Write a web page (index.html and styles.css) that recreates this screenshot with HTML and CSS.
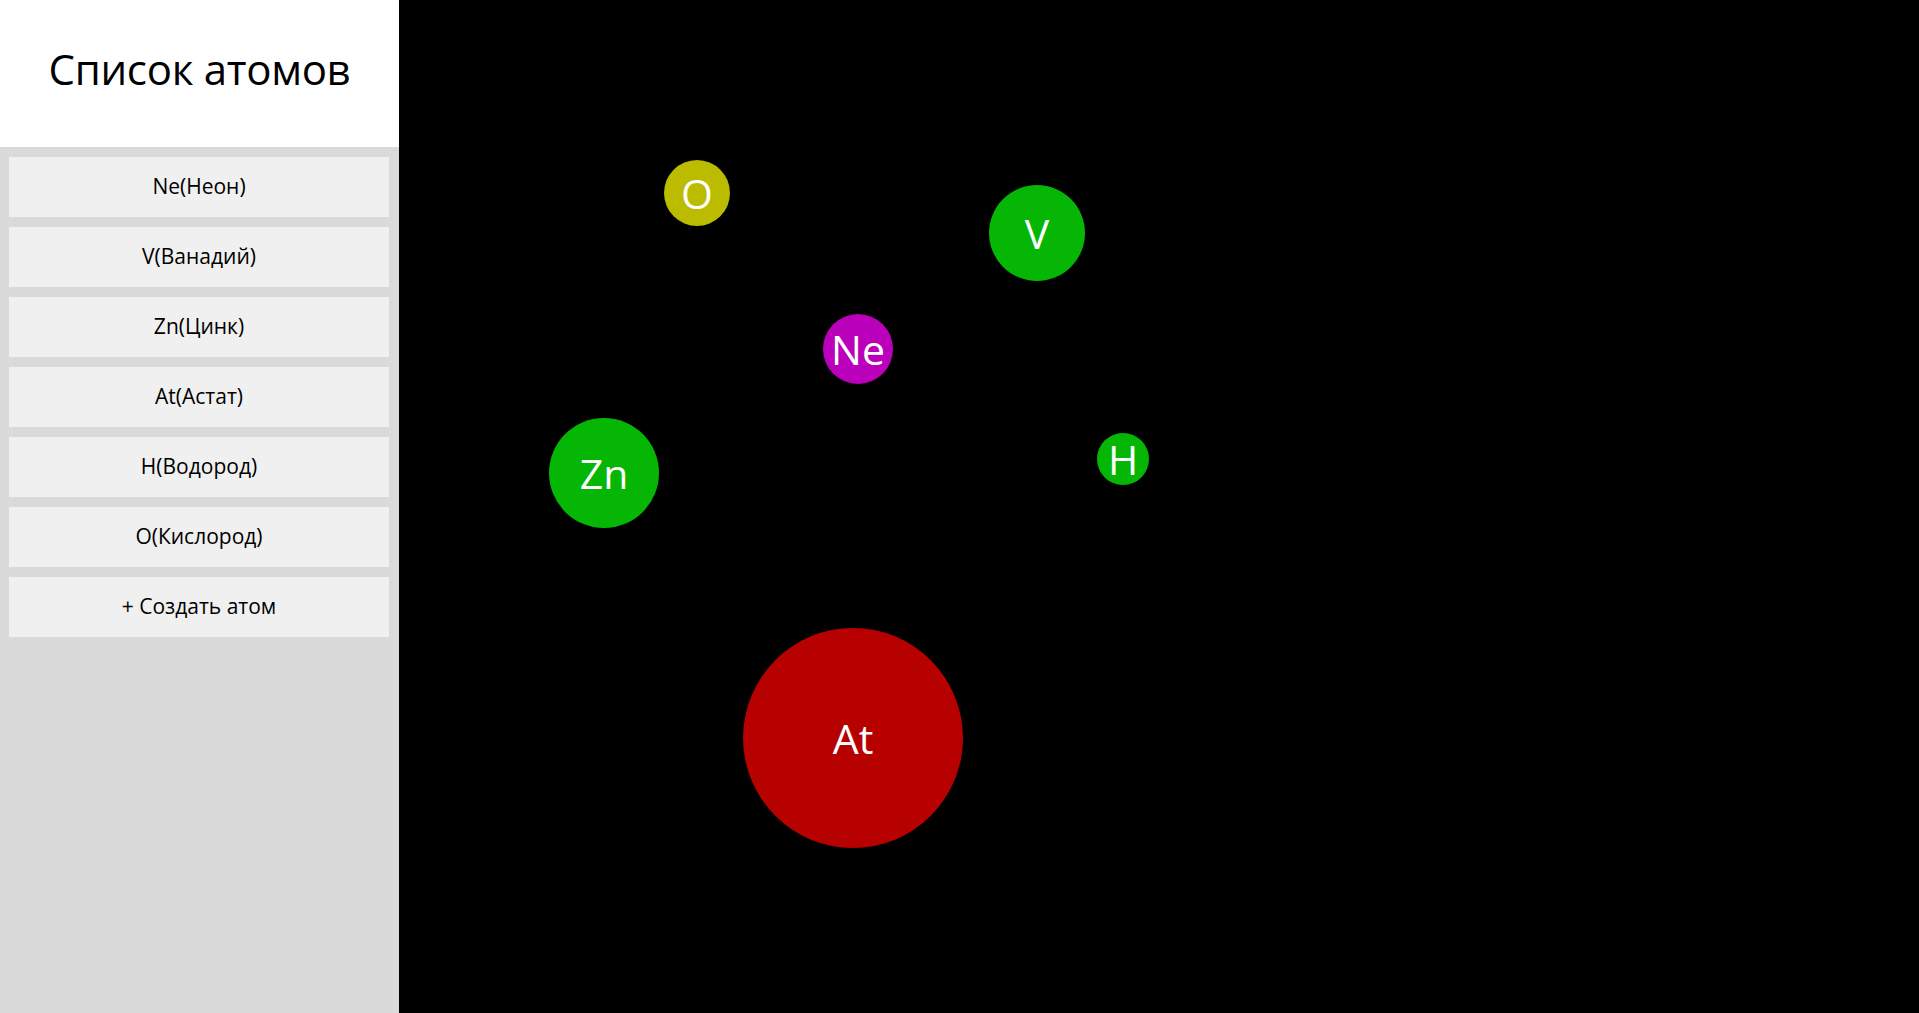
FILE: index.html
```html
<!DOCTYPE html>
<html>
<head>
    <title>Список атомов</title>
    <link rel="stylesheet" href="styles.css">
</head>
<body>
    <div id="sidebar">
        <div id="sidebarHeader">
            <h1>Список атомов</h1>
        </div>
        <div id="atomList">
            <button class="atomButton">Ne(Неон)</button>
            <button class="atomButton">V(Ванадий)</button>
            <button class="atomButton">Zn(Цинк)</button>
            <button class="atomButton">At(Астат)</button>
            <button class="atomButton">H(Водород)</button>
            <button class="atomButton">O(Кислород)</button>
            <button class="atomButton" id="createAtomButton">+ Создать атом</button>
        </div>
    </div>

    <div id="field"></div>

    <script>
        const atoms = [
            { symbol: 'O', color: '#bbbb00', x: 265, y: 160, size: 66 },
            { symbol: 'V', color: '#05b605', x: 590, y: 185, size: 96 },
            { symbol: 'Ne', color: '#bb00bb', x: 424, y: 314, size: 70 },
            { symbol: 'Zn', color: '#05b605', x: 150, y: 418, size: 110 },
            { symbol: 'H', color: '#05b605', x: 698, y: 433, size: 52 },
            { symbol: 'At', color: '#b70000', x: 344, y: 628, size: 220 }
        ];

        const field = document.getElementById('field');

        atoms.forEach((atom) => {
            const el = document.createElement('div');
            el.className = 'atom';
            el.textContent = atom.symbol;
            el.style.left = atom.x + 'px';
            el.style.top = atom.y + 'px';
            el.style.width = atom.size + 'px';
            el.style.height = atom.size + 'px';
            el.style.backgroundColor = atom.color;
            field.appendChild(el);
        });
    </script>
</body>
</html>
```

FILE: styles.css
```css
* {
    margin: 0;
    padding: 0;
    box-sizing: border-box;
}

html, body {
    height: 100%;
}

body {
    display: flex;
    background-color: #000;
    font-family: 'Open Sans', 'Noto Sans', sans-serif;
    overflow: hidden;
}

#sidebar {
    width: 399px;
    flex-shrink: 0;
    height: 100%;
    background-color: #dadada;
    display: flex;
    flex-direction: column;
}

#sidebarHeader {
    height: 147px;
    padding-bottom: 10px;
    background-color: #fff;
    display: flex;
    align-items: center;
    justify-content: center;
}

#sidebarHeader h1 {
    font-size: 42px;
    font-weight: normal;
    color: #000;
    letter-spacing: -0.3px;
}

#atomList {
    display: flex;
    flex-direction: column;
    gap: 10px;
    padding: 10px 10px 10px 9px;
}

.atomButton {
    height: 60px;
    width: 100%;
    border: none;
    background-color: #f0f0f0;
    color: #000;
    font-family: 'Open Sans', 'Noto Sans', sans-serif;
    font-size: 21px;
    padding-bottom: 2px;
    cursor: pointer;
}

#field {
    flex: 1;
    position: relative;
    height: 100%;
}

.atom {
    position: absolute;
    border-radius: 50%;
    color: #fff;
    font-size: 41px;
    display: flex;
    align-items: center;
    justify-content: center;
}
```
